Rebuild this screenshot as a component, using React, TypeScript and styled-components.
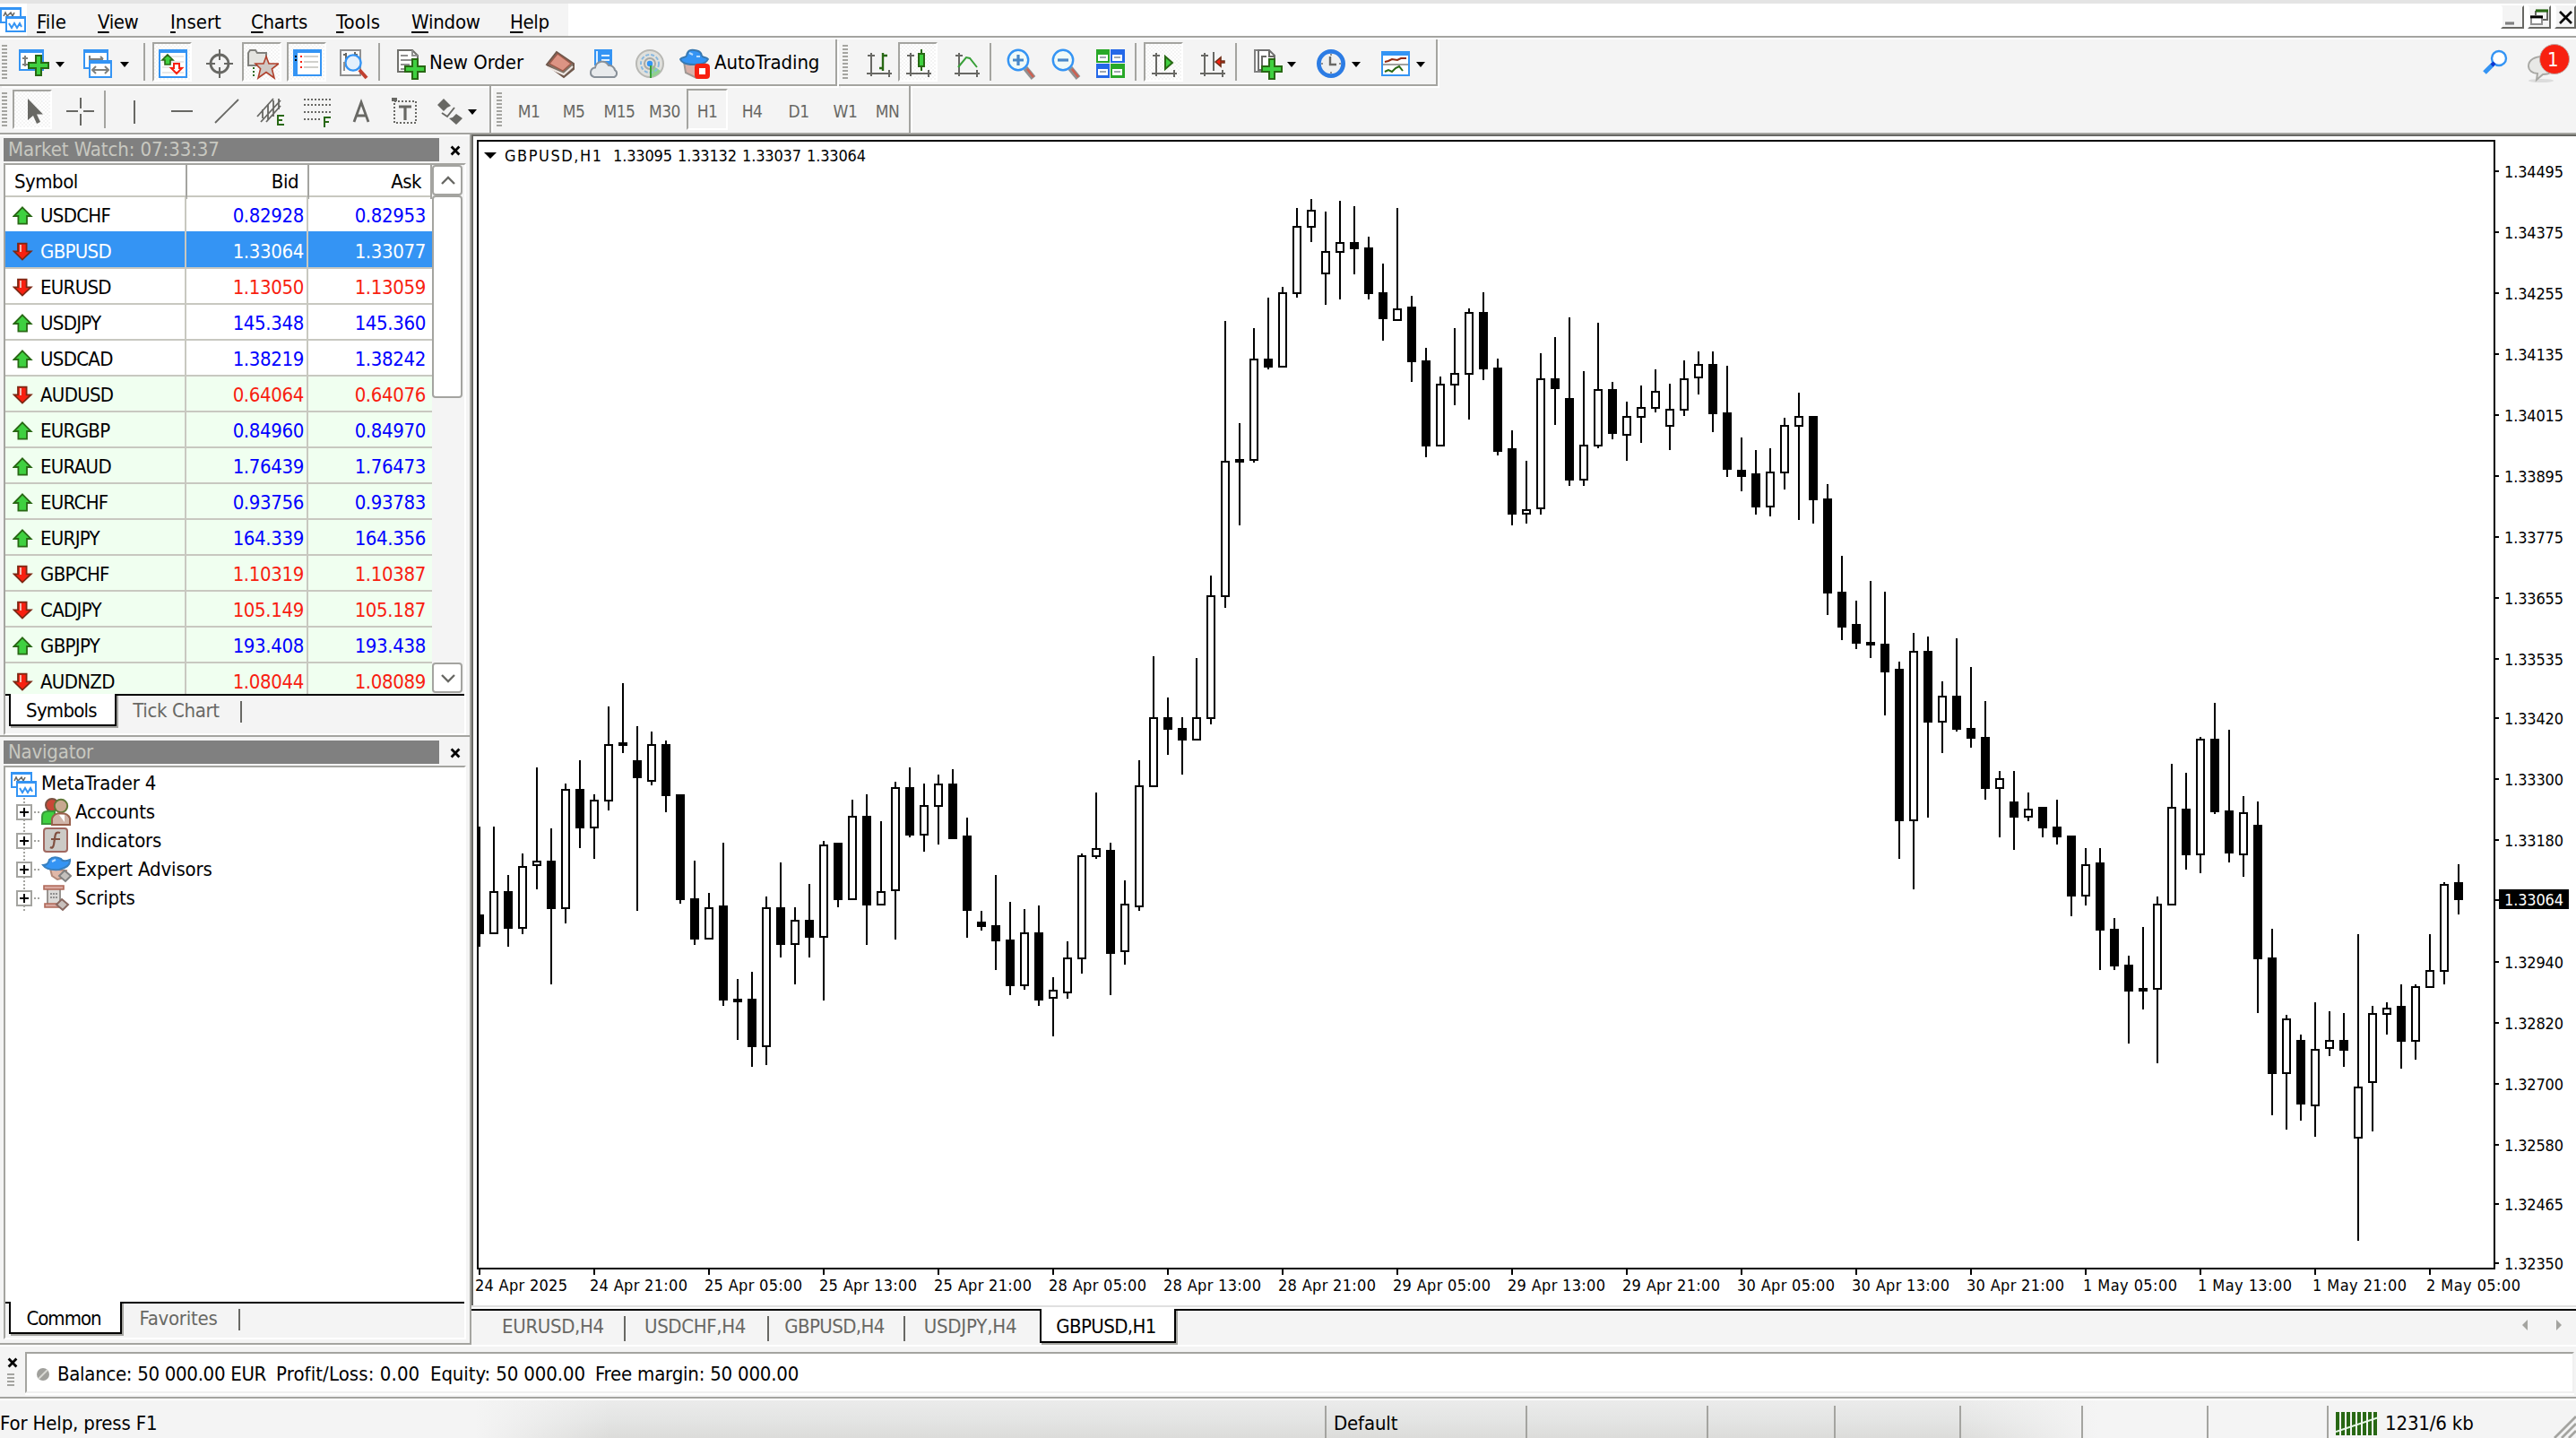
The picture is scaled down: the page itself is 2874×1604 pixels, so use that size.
import React from 'react';
import styled, { createGlobalStyle, css } from 'styled-components';

const FACE = '#f4f4f4';
const LINE = '#a4a4a0';
const SOFT = '#c8c8c0';
const DARK = '#686864';
const BLUE = '#3494f4';
const GREEN = '#3fd040';
const LEAF = '#286814';
const RED = '#f82010';
const FONT = '"DejaVu Sans Condensed", "DejaVu Sans", "Noto Sans", sans-serif';

const Global = createGlobalStyle`
  *, *::before, *::after { box-sizing: border-box; }
  body { margin: 0; background: ${FACE}; font-family: ${FONT}; font-stretch: condensed; }
`;

const Window = styled.div`
  width: 2874px;
  height: 1604px;
  overflow: hidden;
  display: flex;
  flex-direction: column;
  background: ${FACE};
  color: #000;
  font-size: 22px;
  letter-spacing: -0.55px;
  white-space: pre;
`;

/* ---------- menu bar ---------- */
const MenuBar = styled.header`
  height: 42px;
  flex: none;
  display: flex;
  background: #fff;
  border-top: 4px solid #e4e4e4;
  border-bottom: 2px solid ${LINE};
`;
const AppMark = styled.div`
  width: 30px;
  padding-top: 2px;
`;
const Menus = styled.nav`
  width: 604px;
  display: flex;
  background: ${FACE};
`;
const MenuItem = styled.span<{ $w: number; $ls: number }>`
  width: ${p => p.$w}px;
  padding-left: 11px;
  line-height: 41px;
  letter-spacing: ${p => p.$ls}px;
  u {
    text-decoration-thickness: 2px;
    text-underline-offset: 3px;
    text-decoration-skip-ink: none;
  }
`;
const Caption = styled.div`
  margin-left: auto;
  display: flex;
  gap: 4px;
  padding-top: 2px;
`;
const CaptionButton = styled.span<{ $w?: number }>`
  width: ${p => p.$w ?? 26}px;
  height: 26px;
  border: 2px solid #fff;
  border-right-color: ${DARK};
  border-bottom-color: ${DARK};
  border-top-color: ${FACE};
  background: ${FACE};
  display: grid;
  place-items: center;
`;

/* ---------- toolbars ---------- */
const ToolArea = styled.section`
  height: 106px;
  flex: none;
  display: grid;
  grid-template-columns: max-content 1fr;
  background: ${FACE};
  border-top: 2px solid #fff;
`;
const Row = styled.div`
  display: flex;
`;
const Band = styled.div<{ $w: number; $last?: boolean }>`
  width: ${p => p.$w}px;
  height: 52px;
  display: flex;
  align-items: center;
  border-right: 2px solid ${LINE};
  border-bottom: ${p => (p.$last ? 0 : 2)}px solid ${LINE};
  margin-right: 2px;
  box-shadow: 2px 2px 0 #fff;
`;
const Grip = styled.i<{ $gap?: number }>`
  width: 6px;
  height: 38px;
  margin-left: ${p => p.$gap ?? 2}px;
  background: repeating-linear-gradient(${LINE} 0 2px, transparent 2px 4px);
`;
const Rule = styled.i<{ $gap: number }>`
  width: 2px;
  height: 42px;
  margin-left: ${p => p.$gap}px;
  background: ${LINE};
`;
const Tool = styled.span<{ $gap: number; $w?: number; $on?: boolean }>`
  width: ${p => p.$w ?? 36}px;
  height: 44px;
  margin-left: ${p => p.$gap}px;
  display: grid;
  place-items: center;
  svg { transform: translate(1px, 2px); }
  ${p =>
    p.$on &&
    css`
      width: 44px;
      border: 2px solid #fff;
      border-top-color: ${LINE};
      border-left-color: ${LINE};
      background: repeating-conic-gradient(#fff 0 25%, ${FACE} 0 50%) 0 0 / 4px 4px;
    `}
`;
const ToolText = styled.span<{ $gap: number; $w: number }>`
  width: ${p => p.$w}px;
  margin-left: ${p => p.$gap}px;
  letter-spacing: -0.08px;
  line-height: 45px;
`;
const Caret = styled.i<{ $gap?: number }>`
  width: 10px;
  margin-left: ${p => p.$gap ?? 6}px;
  margin-top: 6px;
  border: 5px solid transparent;
  border-top: 6px solid #000;
  border-bottom: 0;
`;
const Periods = styled.div`
  display: flex;
  margin-left: 5px;
`;
const Period = styled.span<{ $w: number; $on?: boolean }>`
  width: ${p => p.$w}px;
  height: 46px;
  text-align: center;
  line-height: 47px;
  font-size: 19px;
  letter-spacing: -0.5px;
  color: ${DARK};
  border: 2px solid transparent;
  ${p =>
    p.$on &&
    css`
      border-color: ${LINE} #fff #fff ${LINE};
    `}
`;
const Alerts = styled.div`
  justify-self: end;
  width: 110px;
  height: 60px;
  padding-top: 2px;
  display: flex;
  align-items: flex-start;
`;

/* ---------- panels ---------- */
const Main = styled.main`
  height: 1352px;
  flex: none;
  display: flex;
  border-top: 2px solid ${LINE};
`;
const Side = styled.aside`
  width: 524px;
  display: flex;
  flex-direction: column;
  border-top: 2px solid #fff;
  border-bottom: 2px solid ${LINE};
`;
const Panel = styled.section<{ $h: number }>`
  height: ${p => p.$h}px;
  padding: 2px 4px 0;
  display: flex;
  flex-direction: column;
`;
const NavPanel = styled(Panel)`
  border-top: 2px solid ${LINE};
  padding-top: 4px;
`;
const TitleRow = styled.div`
  height: 28px;
  flex: none;
  display: flex;
`;
const Title = styled.h2<{ $ls: number }>`
  margin: 0;
  width: 486px;
  height: 26px;
  padding-left: 5px;
  background: #808080;
  color: ${SOFT};
  font-weight: 400;
  font-size: 22px;
  line-height: 25px;
  letter-spacing: ${p => p.$ls}px;
`;
const Close = styled.span`
  width: 26px;
  display: grid;
  place-items: center;
  padding: 0 0 0 10px;
`;
const Frame = styled.div`
  flex: 1;
  min-height: 0;
  width: 516px;
  display: flex;
  flex-direction: column;
  border: 2px solid #fff;
  border-top-color: ${LINE};
  border-left-color: ${LINE};
`;
const Watch = styled.div`
  height: 590px;
  flex: none;
  display: grid;
  grid-template-columns: 476px 34px;
  overflow: hidden;
`;
const Quotes = styled.div`
  height: 590px;
  overflow: hidden;
`;
const HeadRow = styled.div`
  height: 36px;
  display: grid;
  grid-template-columns: 203px 136px 137px;
  background: #fff;
  border-bottom: 2px solid ${SOFT};
  line-height: 38px;
`;
const HeadCell = styled.span<{ $right?: boolean }>`
  letter-spacing: -0.5px;
  border-right: 2px solid ${LINE};
  padding: ${p => (p.$right ? '0 10px 0 0' : '0 0 0 10px')};
  text-align: ${p => (p.$right ? 'right' : 'left')};
`;
const QuoteRow = styled.div<{ $tint?: boolean; $sel?: boolean }>`
  height: 40px;
  display: grid;
  grid-template-columns: 202px 136px 138px;
  background: ${p => (p.$sel ? BLUE : p.$tint ? '#f0fff0' : '#fff')};
  border-bottom: 2px solid ${SOFT};
  ${p =>
    p.$sel &&
    css`
      margin-top: -2px;
      height: 42px;
      padding-top: 2px;
    `}
`;
const NameCell = styled.span<{ $sel?: boolean }>`
  display: flex;
  align-items: center;
  gap: 7px;
  padding-left: 8px;
  line-height: 40px;
  letter-spacing: -0.7px;
  color: ${p => (p.$sel ? '#fff' : '#000')};
  border-right: 2px solid ${SOFT};
`;
const PriceCell = styled.span<{ $c: string; $last?: boolean }>`
  text-align: right;
  line-height: 42px;
  letter-spacing: -0.35px;
  color: ${p => p.$c};
  border-right: ${p => (p.$last ? 0 : 2)}px solid ${SOFT};
  padding-right: ${p => (p.$last ? 7 : 3)}px;
`;
const Scroll = styled.div`
  background: ${FACE};
  display: flex;
  flex-direction: column;
  align-items: center;
  padding-bottom: 1px;
`;
const ScrollButton = styled.span<{ $end?: boolean }>`
  width: 34px;
  height: 34px;
  flex: none;
  margin-top: ${p => (p.$end ? 'auto' : 0)};
  border: 2px solid ${LINE};
  border-radius: 4px;
  background: #fff;
  display: grid;
  place-items: center;
`;
const Thumb = styled.span`
  width: 34px;
  height: 226px;
  border: 2px solid ${LINE};
  border-radius: 4px;
  background: #fff;
`;
const Tabs = styled.div`
  height: 40px;
  flex: none;
  display: flex;
  border-top: 2px solid #000;
`;
const Tab = styled.span<{ $gap?: number; $w: number; $on?: boolean; $ls: number; $h?: number; $pull?: number }>`
  width: ${p => p.$w}px;
  height: ${p => p.$h ?? 36}px;
  margin-left: ${p => p.$gap ?? 0}px;
  padding-right: ${p => p.$pull ?? 0}px;
  text-align: center;
  line-height: ${p => (p.$h ?? 36) - 3}px;
  letter-spacing: ${p => p.$ls}px;
  color: ${p => (p.$on ? '#000' : DARK)};
  ${p =>
    p.$on &&
    css`
      margin-top: -2px;
      padding-top: 2px;
      background: #fff;
      border: 2px solid #000;
      border-top: 0;
      box-shadow: 2px 2px 0 ${LINE};
    `}
`;
const TabRule = styled.i<{ $gap?: number; $h?: number }>`
  width: 2px;
  height: ${p => p.$h ?? 24}px;
  margin: 6px 0 0 ${p => p.$gap ?? 0}px;
  background: ${DARK};
`;
const Tree = styled.ul`
  flex: 1;
  margin: 0;
  padding: 2px 0 0 6px;
  list-style: none;
  background: #fff;
`;
const Root = styled.li`
  height: 32px;
  display: flex;
  align-items: center;
  gap: 4px;
  line-height: 36px;
  letter-spacing: -0.15px;
`;
const Node = styled.li`
  height: 32px;
  display: flex;
  align-items: center;
  padding-left: 6px;
  letter-spacing: -0.15px;
  line-height: 38px;
  background:
    repeating-linear-gradient(${LINE} 0 2px, transparent 2px 4px) 14px 0 / 2px 100% no-repeat;
`;
const Plus = styled.svg`
  width: 18px;
  height: 18px;
  flex: none;
`;
const Dots = styled.i`
  width: 10px;
  height: 2px;
  background: repeating-linear-gradient(90deg, transparent 0 2px, ${LINE} 2px 4px);
`;
const NodeIcon = styled.span`
  width: 34px;
  height: 34px;
  margin-right: 4px;
  svg { display: block; }
`;

/* ---------- chart ---------- */
const ChartSide = styled.section`
  flex: 1;
  display: flex;
  flex-direction: column;
  border-left: 2px solid ${LINE};
`;
const ChartView = styled.div`
  height: 1310px;
  border-left: 2px solid ${DARK};
  border-top: 2px solid ${DARK};
  background: #fff;
  svg { display: block; }
`;
const ChartEdge = styled.div`
  height: 4px;
  margin-top: -4px;
  background: linear-gradient(#e0e0e0 50%, #fff 50%);
`;
const Pager = styled.div`
  margin-left: auto;
  padding: 10px 16px 0 0;
  display: flex;
  gap: 32px;
`;
const Tip = styled.i<{ $left?: boolean }>`
  width: 6px;
  height: 12px;
  background: ${LINE};
  clip-path: ${p => (p.$left ? 'polygon(100% 0, 0 50%, 100% 100%)' : 'polygon(0 0, 100% 50%, 0 100%)')};
`;

/* ---------- bottom ---------- */
const Terminal = styled.section`
  height: 60px;
  flex: none;
  display: flex;
  padding: 6px 0 4px 0;
  border-top: 2px solid #fff;
  border-bottom: 2px solid ${LINE};
`;
const TerminalGrip = styled.div`
  width: 28px;
  padding: 6px 0 0 8px;
  svg { display: block; }
`;
const TerminalDots = styled.i`
  display: block;
  width: 8px;
  height: 14px;
  margin-top: 6px;
  background: repeating-linear-gradient(${LINE} 0 2px, transparent 2px 4px);
`;
const Balance = styled.div`
  flex: 1;
  display: flex;
  align-items: center;
  margin-right: 2px;
  padding: 3px 0 0 9px;
  background: #fff;
  border: 2px solid #f0f0f0;
  border-top-color: ${LINE};
  border-left-color: ${LINE};
  box-shadow: 0 2px 0 #fff;
  svg { margin-right: 7px; }
`;
const Sum = styled.span<{ $w: number; $ls: number }>`
  width: ${p => p.$w}px;
  letter-spacing: ${p => p.$ls}px;
`;
const Status = styled.footer`
  flex: 1;
  display: flex;
  border-top: 2px solid #fff;
  letter-spacing: -0.15px;
  background:
    linear-gradient(90deg, ${FACE} 530px, rgba(244, 244, 244, 0) 680px, rgba(244, 244, 244, 0) 2180px, ${FACE} 2340px),
    linear-gradient(#ebebeb, #e4e5e4 50%, #dcdcda);
`;
const StatusCell = styled.span<{ $w: number; $first?: boolean }>`
  width: ${p => p.$w}px;
  height: 36px;
  margin-top: 6px;
  padding-top: 3px;
  padding-left: ${p => (p.$first ? 0 : 8)}px;
  border-left: ${p => (p.$first ? 0 : 2)}px solid ${LINE};
  display: flex;
  align-items: center;
  gap: 7px;
`;
const Corner = styled.svg`
  margin-left: auto;
  align-self: flex-end;
`;

/* ---------- icons, drawn on an 18 unit grid of doubled pixels ---------- */
const Pic = ({ children, w = 36, h = 36 }: { children: React.ReactNode; w?: number; h?: number }) => (
  <svg width={w} height={h} viewBox={`0 0 ${w / 2} ${h / 2}`} fill="none">
    {children}
  </svg>
);
const GreenPlus = ({ x, y }: { x: number; y: number }) => (
  <path d={`M${x + 4.5} ${y + 0.5}h3v4h4v3h-4v4h-3v-4h-4v-3h4z`} fill={GREEN} stroke={LEAF} />
);
const Axes = () => (
  <>
    <path d="M4.500 3v13M2 14.500h14" stroke={DARK} />
    <path d="M2.500 4.500h4M14.500 12.500v4" stroke={DARK} />
  </>
);
const AppIcon = () => (
  <Pic w={30} h={30}>
    <path d="M.5 1.500h11v8h-11z" fill="#fff" stroke={BLUE} />
    <path d="M0 2h12" stroke={BLUE} />
    <path d="M2 6l1-2 1 2 2-2 1 2 1-2" stroke={DARK} strokeWidth=".8" />
    <path d="M3.500 6.500h10.500v8h-10.500z" fill="#fff" stroke={BLUE} />
    <path d="M3 7h11" stroke={BLUE} />
    <path d="M5 10l1.500 2.500L8 10l1.500 2.500L11 10l1 2" stroke={BLUE} />
  </Pic>
);
const NewChartIcon = () => (
  <Pic>
    <path d="M.5 1.500h13v11H.5z" fill="#fff" stroke={BLUE} />
    <path d="M0 2h14" stroke={BLUE} strokeWidth="2" />
    <path d="M3.500 4.500v6M2 6h3M2 9.500h6" stroke="#80807c" />
    <GreenPlus x={5} y={4} />
  </Pic>
);
const ProfilesIcon = () => (
  <Pic>
    <path d="M.5 1.500h13v10H.5z" fill="#fff" stroke={BLUE} />
    <path d="M0 2h14" stroke={BLUE} strokeWidth="2" />
    <path d="M3.500 4.500v5M3 6.500h8M9.500 5l1.500 1.500" stroke="#80807c" />
    <path d="M3.500 7.500h12v9h-12z" fill="#fff" stroke={BLUE} />
    <path d="M3 8h13" stroke={BLUE} strokeWidth="2" />
    <path d="M5 12.500h9M7 10.500l-2 2 2 2M12 10.500l2 2-2 2" stroke="#80807c" />
  </Pic>
);
const WatchIcon = () => (
  <Pic>
    <path d="M1.500 1.500h15v15h-15z" fill="#fff" stroke={BLUE} />
    <path d="M1 2h16" stroke={BLUE} strokeWidth="2" />
    <path d="M3 5h12M3 8h12M3 11h12M3 14h12" stroke="#e8e8e8" />
    <path d="M6 4l3 3H7.500v2.500h-3V7H3z" fill={GREEN} stroke={LEAF} strokeWidth=".8" />
    <path d="M11 14.500l-3-3h1.500V9h3v2.500H14z" fill="#fff" stroke={RED} />
  </Pic>
);
const CrossIcon = () => (
  <Pic>
    <circle cx="9" cy="9" r="5" fill="#f4f4f4" stroke={DARK} strokeWidth="1.400" />
    <path d="M9 1v6M9 11v6M1.500 9h5M11.500 9h5" stroke={DARK} />
  </Pic>
);
const FavIcon = () => (
  <Pic>
    <path d="M1 3l1-1.500h3L6 3h5v7H1z" fill="#e4e4e0" stroke="#80807c" />
    <path d="M4 11v6" stroke={LEAF} strokeDasharray="1 1" />
    <path d="M11 5l1.500 4H18l-3.800 2.900L15.500 17 11 13.800 6.500 17l1.300-5.100L5 9h4.500z" fill="#d0c8c4" stroke="#b0402c" strokeWidth=".8" />
  </Pic>
);
const NavIcon = () => (
  <Pic>
    <path d="M1.500 1.500h15v14h-15z" fill="#fff" stroke={BLUE} />
    <path d="M1 2h16M2.500 1v15" stroke={BLUE} strokeWidth="2" />
    <path d="M5 5h1M5 8h1M5 11h1" stroke={RED} />
    <path d="M2 5h1M2 7h1" stroke="#000" />
    <path d="M7 5h8M7 8h8M7 11h8" stroke="#d0d0cc" />
  </Pic>
);
const TesterIcon = () => (
  <Pic>
    <path d="M1.500 1.500h11v14h-11z" fill="#fafafa" stroke="#909090" />
    <path d="M4.500 3v4M3 4h2M9.500 2.500v4M9 4h2" stroke={DARK} />
    <circle cx="8.500" cy="8.500" r="4.300" fill="#e4f0fc" stroke={BLUE} strokeWidth="1.200" />
    <path d="M3.500 8v5" stroke="#909090" />
    <path d="M12 12.500l4 4.500" stroke="#c04030" strokeWidth="2" />
  </Pic>
);
const OrderIcon = () => (
  <Pic>
    <path d="M1.500 1.500h8l3 3v9h-11z" fill="#fff" stroke="#70706c" />
    <path d="M9.500 1.500v3h3M3 4.500h4M3 7h7M3 9.500h5M3 12h4" stroke="#909090" />
    <GreenPlus x={5} y={6} />
  </Pic>
);
const BookIcon = () => (
  <Pic>
    <path d="M1.500 9.500L7 2.500l9.500 6.500v3L11 16.500z" fill="#807468" stroke="#70584c" />
    <path d="M3 9L7.500 3.500l7.500 5.500-4.500 4z" fill="#dc9484" stroke="#a05848" strokeWidth=".6" />
    <path d="M2 11l9 4 5-4.500" stroke="#f0e8e4" />
  </Pic>
);
const HostIcon = () => (
  <Pic>
    <path d="M3.500 1.500h9v8h-9z" fill={BLUE} stroke={BLUE} />
    <path d="M4.500 2v8M7 4.500h4.500M7 7h4.500" stroke="#e0f0ff" />
    <path d="M3 16.500a2.700 2.700 0 01.5-5.300A4 4 0 0111 10a3.200 3.200 0 013.500 2.600 2.200 2.200 0 01-.3 3.900z" fill="#e8eaec" stroke="#889098" />
  </Pic>
);
const SignalIcon = () => (
  <Pic>
    <circle cx="9" cy="9" r="7.500" fill="#e0e0dc" stroke="#b8b8b4" />
    <path d="M9 9v7.500A7.500 7.500 0 0015 13z" fill="#90d090" />
    <circle cx="9" cy="9" r="5" stroke="#88b8e0" strokeDasharray="2 1" />
    <circle cx="9" cy="9" r="3" stroke="#a8a8a4" />
    <circle cx="9" cy="9" r="1.600" fill={BLUE} />
    <path d="M9.500 10v7" stroke="#38a038" />
  </Pic>
);
const AutoIcon = () => (
  <Pic>
    <path d="M3 8h12l-2 8-3 1-6-3z" fill="#d8b0a8" stroke="#a09894" />
    <path d="M1 6.500C2 5 4 6 4.500 4.500 5 1.500 7 1 9 1.500s3.500.5 4 3c.5 1.500 2.500.5 3.500 2-1 2.500-5 3-8 3s-6.500-.5-7.500-3z" fill={BLUE} stroke="#3878b0" />
    <path d="M6 3l2 1M10 5h2" stroke="#b8dcff" />
    <rect x="9" y="9" width="8.500" height="8.500" rx="2" fill={RED} />
    <rect x="11.500" y="11.500" width="3.500" height="3.500" fill="#fff" />
  </Pic>
);
const BarsIcon = () => (
  <Pic>
    <Axes />
    <path d="M11 3v10M9 11.500h2M11 4.500h2.500" stroke={LEAF} strokeWidth="1.200" />
  </Pic>
);
const CandleIcon = () => (
  <Pic>
    <Axes />
    <path d="M10.500 1v12" stroke={LEAF} />
    <path d="M9 3.500h3v7H9z" fill={GREEN} stroke={LEAF} />
  </Pic>
);
const LineIcon = () => (
  <Pic>
    <Axes />
    <path d="M4 11l4.500-5.500 2 .5 4 5" stroke="#38a038" />
  </Pic>
);
const ZoomIcon = ({ plus }: { plus?: boolean }) => (
  <Pic>
    <path d="M11 11.500l4.500 5.500" stroke="#909090" strokeWidth="3" />
    <path d="M12 12l3.500 4.500" stroke="#d06050" strokeWidth="1.200" />
    <circle cx="7" cy="7" r="5.600" fill="#f0faf8" stroke={BLUE} strokeWidth="1.200" />
    <path d={plus ? 'M7 4v6M4 7h6' : 'M4 7h6'} stroke="#4888c8" strokeWidth="1.600" />
  </Pic>
);
const TileIcon = () => (
  <Pic>
    <path d="M1 1h7.500v7.500H1zM9 9h8v8H9z" fill="#28a828" />
    <path d="M9 1h8v7.500H9zM1 9h7.500v8H1z" fill="#2468e8" />
    <path d="M2 4h5.500v3.500H2zM10 4h5.500v3.500H10zM2 12h5.500v3.500H2zM10 12h5.500v3.500H10z" fill="#fff" />
    <path d="M3 5.500h3.500M11 5.500h3.500M3 13.500h3.500M11 13.500h3.500" stroke="#a0a8b0" />
  </Pic>
);
const AutoScrollIcon = () => (
  <Pic>
    <Axes />
    <path d="M9.500 5v7l4-3.500z" fill={GREEN} stroke={LEAF} />
  </Pic>
);
const ShiftIcon = () => (
  <Pic>
    <Axes />
    <path d="M9.500 2.500v10.500" stroke={DARK} />
    <path d="M10.500 8l3-2.500V7.500h2v1h-2v2z" fill={RED} stroke="#703018" strokeWidth=".8" />
  </Pic>
);
const IndicatorIcon = () => (
  <Pic>
    <path d="M1.500 1.500h7v12h-7z" fill="#fff" stroke="#808080" />
    <path d="M3.500 1.500h6l3 3v8h-9z" fill="#fff" stroke="#707070" />
    <path d="M9.500 2v3h3M5 5h3M5.500 5v6" stroke={DARK} />
    <GreenPlus x={5} y={6} />
  </Pic>
);
const ClockIcon = () => (
  <Pic>
    <circle cx="9" cy="9" r="6.800" fill="#eef0f0" stroke="#2c7ce4" strokeWidth="2.400" />
    <path d="M8.500 5v4.500H12" stroke={DARK} strokeWidth="1.200" />
    <path d="M9 3.500v1M9 13.500v1M3.500 9h1M13.500 9h1" stroke="#909090" />
  </Pic>
);
const TemplateIcon = () => (
  <Pic>
    <path d="M1.500 2.500h15v13h-15z" fill="#fff" stroke={BLUE} />
    <path d="M1 3.500h16" stroke={BLUE} strokeWidth="2" />
    <path d="M2 9.500h14" stroke="#a0a0a0" />
    <path d="M3 8l2-.5L7 6.500l3 .5 2-1h3" stroke="#902810" />
    <path d="M3 13.500l2-1 2 1 2-2 2-1 2 2.500" stroke={LEAF} />
  </Pic>
);
const CursorIcon = () => (
  <Pic>
    <path d="M6 2v12l3-2.500 2 4.500 2-1-2-4.200h3.500z" fill={DARK} />
  </Pic>
);
const CrosshairIcon = () => (
  <Pic>
    <path d="M9.500 1.500v6M9.500 10.500v6.500M1.500 9h6.500M11 9h6" stroke={DARK} />
  </Pic>
);
const VLineIcon = () => (
  <Pic>
    <path d="M8.500 3v13" stroke={DARK} />
  </Pic>
);
const HLineIcon = () => (
  <Pic>
    <path d="M3 9h12" stroke={DARK} />
  </Pic>
);
const TrendIcon = () => (
  <Pic>
    <path d="M2.500 15.500l13-13" stroke={DARK} strokeWidth=".9" />
  </Pic>
);
const ChannelIcon = () => (
  <Pic>
    <path d="M1 12L10 2M3 15L14 3M6 15l8-9M4 8v5M7 5v9M10 3v9M13 2v6" stroke={DARK} strokeWidth=".9" />
    <path d="M16 11.500h-3.500v5H16M12.500 14H15" stroke={LEAF} />
  </Pic>
);
const FiboIcon = () => (
  <Pic>
    <path d="M1 2.500h15M1 5.500h15M1 9.500h15M1 13.500h10" stroke={DARK} strokeDasharray="1 1" />
    <path d="M16 12.500h-3.500V18M12.500 15H15" stroke={LEAF} />
  </Pic>
);
const TextIcon = () => (
  <Pic>
    <path d="M5 15L9 4l4 11M6.500 11.500h5" stroke={DARK} strokeWidth="1.400" />
  </Pic>
);
const LabelIcon = () => (
  <Pic>
    <path d="M2.500 3.500h12v12h-12z" stroke={DARK} strokeDasharray="1 1" />
    <path d="M1 2.500h3" stroke={DARK} strokeWidth="2" />
    <path d="M5 6.500h7M8.500 6v8" stroke={DARK} strokeWidth="1.600" />
  </Pic>
);
const ArrowsIcon = () => (
  <Pic>
    <path d="M5 2l4 4-2 1-2 2-3.500-3.500z" fill={DARK} />
    <path d="M4 10l3 2 4-5" stroke={DARK} />
    <path d="M12 16.500L8 13l2-.5 2-2 3.500 2.500z" fill={DARK} />
  </Pic>
);
const SearchIcon = () => (
  <Pic w={30} h={30}>
    <circle cx="9" cy="5" r="4" fill="#fff" stroke={BLUE} strokeWidth="1.200" />
    <path d="M6 8l-5 5" stroke={BLUE} strokeWidth="2.600" />
    <path d="M6.500 7.500L5 9" stroke="#1038d0" strokeWidth="2" />
  </Pic>
);
const AlertIcon = () => (
  <svg width="54" height="52" viewBox="0 0 54 52">
    <ellipse cx="18" cy="42" rx="14" ry="2" fill="#dcdcdc" />
    <path d="M4 26c0-8 8-11 16-11s14 4 14 10-6 10-14 10l-7 6 1-7c-6 0-10-4-10-8z" fill="#e8e8e6" stroke="#a8a8a4" strokeWidth="2" />
    <circle cx="33" cy="18" r="16.500" fill={RED} stroke="#c0a8a4" />
    <text x="31" y="26" fill="#fff" fontSize="22" textAnchor="middle" fontFamily={FONT}>1</text>
  </svg>
);
const SmallX = () => (
  <Pic w={12} h={12}>
    <path d="M.8.8l4.400 4.400M5.200.8L.8 5.200" stroke="#000" strokeWidth="1.400" />
  </Pic>
);
const Move = ({ up }: { up: boolean }) =>
  up ? (
    <Pic w={24} h={22}>
      <path d="M5.500.7l4.800 4.800H8v4.300H3.200V5.500H.8z" fill={GREEN} stroke={LEAF} strokeWidth=".9" />
    </Pic>
  ) : (
    <Pic w={24} h={22}>
      <path d="M5.500 9.800L.8 5.200H3V.8h4.800v4.400h2.500z" fill={RED} stroke="#7c2814" strokeWidth=".9" />
      <path d="M4.500 1.500v4" stroke="#f0b8b0" />
    </Pic>
  );
const TreeIcons = {
  Accounts: (
    <Pic w={34} h={34}>
      <circle cx="6" cy="4.500" r="3.500" fill="#c84838" stroke="#785040" />
      <path d="M.5 15v-4q0-3 3-3h4v7z" fill={GREEN} stroke="#389838" />
      <circle cx="11" cy="5" r="3.600" fill="#c8a890" stroke="#607838" />
      <path d="M6 15.500V12q1-3 5-3t5 3v3.500z" fill="#d0b4a8" stroke="#98604c" />
      <path d="M10 10l3 4v-4z" fill="#fff" />
    </Pic>
  ),
  Indicators: (
    <Pic w={34} h={34}>
      <rect x="1.500" y="1.500" width="13" height="13" rx="1.500" fill="#cccac6" stroke="#a06860" />
      <path d="M10.500 4q-2.500-1-2.800 2L7 10.500Q6.500 13 5 12M5.500 7.500h5" stroke="#805040" strokeWidth="1.100" />
    </Pic>
  ),
  'Expert Advisors': (
    <Pic w={34} h={34}>
      <path d="M5 8l1 4 3 2 4-1 1-4z" fill="#e0b8a8" stroke="#b08878" />
      <path d="M1 6q3 0 3.500-3Q7 .5 11 2.500q1 2 5 .5.500 4-6 5.500Q3 9 1 6z" fill={BLUE} stroke="#3880c0" />
      <path d="M6 4l2-1" stroke="#c0e0ff" />
      <path d="M13 9l3.500 3-3 3-3.500-3z" fill="#c4c0bc" stroke="#808080" />
    </Pic>
  ),
  Scripts: (
    <Pic w={34} h={34}>
      <path d="M3.500 3h7v10h-7z" fill="#dcdad8" stroke="#989490" />
      <path d="M1.500 1.500h11v2h-11zM2 11.500h9v2H2z" fill="#d8a8a0" stroke="#b06858" strokeWidth=".8" />
      <path d="M5 6h4M5 8h4" stroke="#909090" strokeDasharray="1 .5" />
      <path d="M11.500 9l3.500 3-3 3-3.500-3z" fill="#c8c0bc" stroke="#886860" />
    </Pic>
  ),
};

/* ---------- data ---------- */
const menus: [string, number, number][] = [
  ['File', 68, 0], ['View', 81, -0.4], ['Insert', 90, 0], ['Charts', 95, -0.3],
  ['Tools', 84, 0.2], ['Window', 110, -0.2], ['Help', 60, -0.4],
];
const periods: [string, number][] = [
  ['M1', 50], ['M5', 50], ['M15', 52], ['M30', 49], ['H1', 46], ['H4', 54], ['D1', 50], ['W1', 54], ['MN', 40],
];
const quotes: [string, string, string, boolean][] = [
  ['USDCHF', '0.82928', '0.82953', true],
  ['GBPUSD', '1.33064', '1.33077', false],
  ['EURUSD', '1.13050', '1.13059', false],
  ['USDJPY', '145.348', '145.360', true],
  ['USDCAD', '1.38219', '1.38242', true],
  ['AUDUSD', '0.64064', '0.64076', false],
  ['EURGBP', '0.84960', '0.84970', true],
  ['EURAUD', '1.76439', '1.76473', true],
  ['EURCHF', '0.93756', '0.93783', true],
  ['EURJPY', '164.339', '164.356', true],
  ['GBPCHF', '1.10319', '1.10387', false],
  ['CADJPY', '105.149', '105.187', false],
  ['GBPJPY', '193.408', '193.438', true],
  ['AUDNZD', '1.08044', '1.08089', false],
];
// high, body top, body bottom, low, 1 = bearish (solid)
const candles: number[][] = [
  [922,1020,1042,1056,1],[922,994,1042,1042,0],[976,994,1036,1056,1],[952,966,1036,1042,0],[856,960,966,992,0],
  [924,960,1014,1098,1],[874,880,1014,1030,0],[848,880,924,946,1],[886,892,924,958,0],[788,830,894,904,0],
  [762,828,832,840,1],[810,848,868,1016,1],[816,830,872,876,0],[826,830,888,906,1],[886,886,1004,1008,1],
  [960,1002,1048,1054,1],[996,1012,1048,1048,0],[940,1010,1116,1122,1],[1092,1114,1118,1160,1],[1084,1114,1168,1190,1],
  [1000,1012,1168,1188,0],[962,1012,1054,1068,1],[1012,1026,1054,1098,0],[986,1026,1046,1068,1],[938,942,1046,1116,0],
  [940,940,1004,1012,1],[892,910,1004,1004,0],[886,910,1010,1054,1],[916,994,1010,1010,0],[872,878,994,1048,0],
  [856,878,932,934,1],[874,898,932,950,0],[864,874,900,942,0],[858,874,936,936,1],[912,932,1016,1046,1],
  [1016,1028,1034,1038,1],[976,1032,1050,1082,1],[1006,1048,1100,1110,1],[1014,1040,1100,1104,0],[1010,1040,1116,1122,1],
  [1090,1104,1114,1156,0],[1050,1068,1108,1114,0],[952,954,1070,1086,0],[884,946,956,958,0],[940,948,1064,1110,1],
  [982,1008,1062,1076,0],[848,876,1012,1016,0],[732,800,878,878,0],[778,800,814,842,1],[800,812,826,864,1],
  [734,800,826,826,0],[642,664,802,808,0],[358,514,666,678,0],[472,512,516,586,1],[366,400,514,516,0],
  [332,400,410,412,1],[320,326,410,410,0],[232,252,328,332,0],[222,234,254,270,0],[236,280,306,340,0],
  [224,270,282,334,0],[230,270,278,306,1],[264,276,328,334,1],[294,326,356,380,1],[232,344,358,358,0],
  [330,342,404,426,1],[388,402,498,510,1],[420,428,498,498,0],[366,416,430,452,0],[344,348,418,468,0],
  [326,348,412,424,1],[400,410,504,508,1],[480,500,574,586,1],[514,568,574,584,0],[394,422,568,574,0],
  [376,422,434,474,1],[354,444,536,542,1],[414,496,536,542,0],[360,434,498,500,0],[426,434,484,490,1],
  [448,464,486,514,0],[430,454,466,494,0],[412,436,456,460,0],[428,456,476,502,0],[402,422,458,464,0],
  [392,406,422,440,0],[392,406,462,482,1],[408,460,524,532,1],[488,524,532,548,1],[502,528,566,574,1],
  [500,526,566,576,0],[466,474,528,546,0],[438,464,476,580,0],[464,464,558,584,1],[540,556,662,686,1],
  [620,660,700,714,1],[670,696,718,724,1],[648,716,720,734,1],[660,718,750,798,1],[738,746,916,958,1],
  [706,726,916,992,0],[710,726,806,912,1],[760,776,806,840,0],[712,776,814,816,1],[744,812,824,834,1],
  [782,822,880,892,1],[860,868,880,934,0],[860,894,912,948,1],[884,902,912,916,0],[900,900,924,934,1],
  [892,922,934,942,1],[932,932,1000,1022,1],[946,964,1000,1010,0],[946,962,1038,1082,1],[1024,1036,1078,1082,1],
  [1066,1076,1106,1164,1],[1034,1102,1106,1126,1],[1000,1008,1104,1186,0],[852,900,1010,1010,0],[862,902,954,970,1],
  [822,824,954,974,0],[784,824,906,908,1],[814,904,952,962,1],[888,906,954,978,0],[894,920,1070,1130,1],
  [1036,1068,1198,1244,1],[1132,1136,1198,1260,0],[1154,1160,1232,1250,1],[1118,1170,1234,1268,0],[1128,1160,1170,1178,0],
  [1130,1160,1172,1190,1],[1042,1212,1270,1384,0],[1122,1130,1208,1262,0],[1118,1124,1132,1154,0],[1098,1122,1162,1192,1],
  [1098,1100,1162,1182,0],[1042,1082,1102,1102,0],[984,986,1084,1098,0],[964,984,1004,1020,1],
];
const prices: [string, number][] = [
  ['1.34495', 190], ['1.34375', 258], ['1.34255', 326], ['1.34135', 394], ['1.34015', 462], ['1.33895', 530],
  ['1.33775', 598], ['1.33655', 666], ['1.33535', 734], ['1.33420', 800], ['1.33300', 868], ['1.33180', 936],
  ['1.32940', 1072], ['1.32820', 1140], ['1.32700', 1208], ['1.32580', 1276], ['1.32465', 1342], ['1.32350', 1408],
];
const dates = [
  '24 Apr 2025', '24 Apr 21:00', '25 Apr 05:00', '25 Apr 13:00', '25 Apr 21:00', '28 Apr 05:00', '28 Apr 13:00',
  '28 Apr 21:00', '29 Apr 05:00', '29 Apr 13:00', '29 Apr 21:00', '30 Apr 05:00', '30 Apr 13:00', '30 Apr 21:00',
  '1 May 05:00', '1 May 13:00', '1 May 21:00', '2 May 05:00',
];

const Chart = () => (
  <svg width="2346" height="1308" viewBox="528 152 2346 1308" fontFamily={FONT} fontSize="18" letterSpacing="0">
    <g shapeRendering="crispEdges">
      <path d="M533 1416V157H2783V1416M532 1415H2784" fill="none" stroke="#000" strokeWidth="2" />
      <clipPath id="plot"><path d="M534 158H2782V1414H534z" /></clipPath>
      <g clipPath="url(#plot)">
        {candles.map(([hi, top, bottom, lo, solid], i) => {
          const x = 534 + i * 16;
          return (
            <g key={i}>
              <rect x={x} y={hi} width="2" height={lo - hi} />
              <rect x={x - 4} y={top} width="10" height={bottom - top} />
              {!solid && <rect x={x - 2} y={top + 2} width="6" height={bottom - top - 4} fill="#fff" />}
            </g>
          );
        })}
      </g>
      {prices.map(([, y]) => <rect key={y} x="2784" y={y} width="4" height="2" />)}
      <rect x="2784" y="1003" width="4" height="2" />
      {dates.map((d, i) => <rect key={d} x={534 + i * 128} y="1416" width="2" height="6" />)}
      <rect x="2788" y="992" width="78" height="22" />
    </g>
    <path d="M540 170h14l-7 7z" />
    <text x="563" y="180" textLength="108">GBPUSD,H1</text>
    {['1.33095', '1.33132', '1.33037', '1.33064'].map((p, i) => (
      <text key={p} x={684 + i * 72} y="180" textLength="66">{p}</text>
    ))}
    {prices.map(([p, y]) => <text key={p} x="2794" y={y + 8} textLength="66">{p}</text>)}
    <text x="2794" y="1010" textLength="66" fill="#fff">1.33064</text>
    {dates.map((d, i) => (
      <text key={d} x={i > 13 ? 532 + i * 128 - (i === 17 ? 1 : 0) : 530 + i * 128} y="1440" textLength={i === 0 ? 103 : i > 13 ? 105 : 109}>{d}</text>
    ))}
  </svg>
);

export default function App() {
  return (
    <>
      <Global />
      <Window>
        <MenuBar>
          <AppMark><AppIcon /></AppMark>
          <Menus>
            {menus.map(([name, w, ls]) => (
              <MenuItem key={name} $w={w} $ls={ls}><u>{name[0]}</u>{name.slice(1)}</MenuItem>
            ))}
          </Menus>
          <Caption>
            <CaptionButton><Pic w={20} h={20}><path d="M1 8.500h5" stroke="#808080" strokeWidth="1.600" /></Pic></CaptionButton>
            <CaptionButton>
              <Pic w={20} h={20}>
                <path d="M3 1.500h6.500v5H7M3 1.500V4" stroke={DARK} />
                <path d="M3 1.500h7" stroke={LEAF} strokeWidth="1.600" />
                <path d="M.5 4.500h6v4.500h-6z" fill="#fff" stroke="#909090" />
                <path d="M0 5h7" stroke="#000" strokeWidth="1.400" />
              </Pic>
            </CaptionButton>
            <CaptionButton $w={24}><Pic w={20} h={20}><path d="M2 2l6.500 6.500M8.500 2L2 8.500" stroke="#000" strokeWidth="1.300" /></Pic></CaptionButton>
          </Caption>
        </MenuBar>

        <ToolArea>
          <div>
            <Row>
              <Band $w={934}>
                <Grip />
                <Tool $gap={12}><NewChartIcon /></Tool><Caret />
                <Tool $gap={20}><ProfilesIcon /></Tool><Caret />
                <Rule $gap={16} />
                <Tool $gap={8} $on><WatchIcon /></Tool>
                <Tool $gap={12}><CrossIcon /></Tool>
                <Tool $gap={8} $on><FavIcon /></Tool>
                <Tool $gap={6} $on><NavIcon /></Tool>
                <Tool $gap={12}><TesterIcon /></Tool>
                <Rule $gap={10} />
                <Tool $gap={16}><OrderIcon /></Tool>
                <ToolText $gap={3} $w={104}>New Order</ToolText>
                <Tool $gap={23}><BookIcon /></Tool>
                <Tool $gap={14}><HostIcon /></Tool>
                <Tool $gap={14}><SignalIcon /></Tool>
                <Tool $gap={14}><AutoIcon /></Tool>
                <ToolText $gap={5} $w={119}>AutoTrading</ToolText>
              </Band>
              <Band $w={668}>
                <Grip $gap={4} />
                <Tool $gap={16}><BarsIcon /></Tool>
                <Tool $gap={4} $on><CandleIcon /></Tool>
                <Tool $gap={14}><LineIcon /></Tool>
                <Rule $gap={8} />
                <Tool $gap={15}><ZoomIcon plus /></Tool>
                <Tool $gap={14}><ZoomIcon /></Tool>
                <Tool $gap={13}><TileIcon /></Tool>
                <Rule $gap={10} />
                <Tool $gap={8} $on><AutoScrollIcon /></Tool>
                <Tool $gap={14}><ShiftIcon /></Tool>
                <Rule $gap={8} />
                <Tool $gap={16}><IndicatorIcon /></Tool><Caret $gap={4} />
                <Tool $gap={20}><ClockIcon /></Tool><Caret />
                <Tool $gap={20}><TemplateIcon /></Tool><Caret />
              </Band>
            </Row>
            <Row>
              <Band $w={548} $last>
                <Grip />
                <Tool $gap={6} $on><CursorIcon /></Tool>
                <Tool $gap={12}><CrosshairIcon /></Tool>
                <Rule $gap={10} />
                <Tool $gap={14}><VLineIcon /></Tool>
                <Tool $gap={16}><HLineIcon /></Tool>
                <Tool $gap={14}><TrendIcon /></Tool>
                <Tool $gap={14}><ChannelIcon /></Tool>
                <Tool $gap={16}><FiboIcon /></Tool>
                <Tool $gap={12}><TextIcon /></Tool>
                <Tool $gap={14}><LabelIcon /></Tool>
                <Tool $gap={14}><ArrowsIcon /></Tool><Caret $gap={2} />
              </Band>
              <Band $w={466} $last>
                <Grip $gap={4} />
                <Periods>
                  {periods.map(([p, w]) => <Period key={p} $w={w} $on={p === 'H1'}>{p}</Period>)}
                </Periods>
              </Band>
            </Row>
          </div>
          <Alerts>
            <Tool $gap={5} $w={30}><SearchIcon /></Tool>
            <Tool $gap={17} $w={54}><AlertIcon /></Tool>
          </Alerts>
        </ToolArea>

        <Main>
          <Side>
            <Panel $h={668}>
              <TitleRow><Title $ls={-0.08}>Market Watch: 07:33:37</Title><Close><SmallX /></Close></TitleRow>
              <Frame>
                <Watch>
                  <Quotes>
                    <HeadRow>
                      <HeadCell>Symbol</HeadCell>
                      <HeadCell $right>Bid</HeadCell>
                      <HeadCell $right>Ask</HeadCell>
                    </HeadRow>
                    {quotes.map(([name, bid, ask, up], i) => {
                      const sel = i === 1;
                      const c = sel ? '#fff' : up ? '#0000ff' : RED;
                      return (
                        <QuoteRow key={name} $sel={sel} $tint={i > 4}>
                          <NameCell $sel={sel}><Move up={up} />{name}</NameCell>
                          <PriceCell $c={c}>{bid}</PriceCell>
                          <PriceCell $c={c} $last>{ask}</PriceCell>
                        </QuoteRow>
                      );
                    })}
                  </Quotes>
                  <Scroll>
                    <ScrollButton><Pic w={20} h={20}><path d="M2 7l3.500-3.500L9 7" stroke={DARK} strokeWidth="1.200" /></Pic></ScrollButton>
                    <Thumb />
                    <ScrollButton $end><Pic w={20} h={20}><path d="M2 3.500L5.500 7 9 3.500" stroke={DARK} strokeWidth="1.200" /></Pic></ScrollButton>
                  </Scroll>
                </Watch>
                <Tabs>
                  <Tab $gap={4} $w={120} $on $ls={-0.75} $pull={3}>Symbols</Tab>
                  <Tab $w={136} $ls={-0.35} $pull={3}>Tick Chart</Tab>
                  <TabRule $gap={2} />
                </Tabs>
              </Frame>
            </Panel>
            <NavPanel $h={674}>
              <TitleRow><Title $ls={-0.2}>Navigator</Title><Close><SmallX /></Close></TitleRow>
              <Frame>
                <Tree>
                  <Root><AppIcon />MetaTrader 4</Root>
                  {(Object.keys(TreeIcons) as (keyof typeof TreeIcons)[]).map(name => (
                    <Node key={name}>
                      <Plus viewBox="0 0 9 9">
                        <path d="M.5.5h8v8h-8z" fill="#fff" stroke={LINE} />
                        <path d="M2 4.500h5M4.500 2v5" stroke="#000" />
                      </Plus>
                      <Dots />
                      <NodeIcon>{TreeIcons[name]}</NodeIcon>
                      {name}
                    </Node>
                  ))}
                </Tree>
                <Tabs>
                  <Tab $gap={4} $w={126} $on $ls={-1} $pull={4}>Common</Tab>
                  <Tab $w={128} $ls={-0.25} $pull={2}>Favorites</Tab>
                  <TabRule $gap={2} />
                </Tabs>
              </Frame>
            </NavPanel>
          </Side>

          <ChartSide>
            <ChartView><Chart /></ChartView>
            <ChartEdge />
            <Tabs>
              <Tab $w={170} $ls={-0.35} $h={38}>  EURUSD,H4</Tab><TabRule $h={28} />
              <Tab $w={158} $ls={-0.35} $h={38} $pull={3}>USDCHF,H4</Tab><TabRule $h={28} />
              <Tab $w={150} $ls={-0.6} $h={38} $pull={4}>GBPUSD,H4</Tab><TabRule $h={28} />
              <Tab $w={150} $ls={-0.2} $h={38} $pull={5}>USDJPY,H4</Tab>
              <Tab $w={152} $ls={-0.6} $h={38} $on $pull={4}>GBPUSD,H1</Tab>
              <Pager><Tip $left /><Tip /></Pager>
            </Tabs>
          </ChartSide>
        </Main>

        <Terminal>
          <TerminalGrip>
            <SmallX />
            <TerminalDots />
          </TerminalGrip>
          <Balance>
            <Pic w={18} h={18}><circle cx="4.500" cy="4.500" r="3.500" fill="#a0a09c" /><path d="M2 7l5-5" stroke="#d8d8d4" /></Pic>
            <Sum $w={244} $ls={-0.3}>Balance: 50 000.00 EUR</Sum>
            <Sum $w={172} $ls={0.1}>Profit/Loss: 0.00</Sum>
            <Sum $w={184} $ls={-0.1}>Equity: 50 000.00</Sum>
            <Sum $w={240} $ls={-0.2}>Free margin: 50 000.00</Sum>
          </Balance>
        </Terminal>
        <Status>
          <StatusCell $w={1478} $first>For Help, press F1</StatusCell>
          <StatusCell $w={224}>Default</StatusCell>
          <StatusCell $w={202} />
          <StatusCell $w={142} />
          <StatusCell $w={140} />
          <StatusCell $w={136} />
          <StatusCell $w={140} />
          <StatusCell $w={134} />
          <StatusCell $w={230}>
            <Pic w={48} h={26}>
              <path d="M0 6.500h24" stroke={LEAF} strokeWidth="13" strokeDasharray="2 1" />
              <path d="M0 11L24 3" stroke="#e8f8e8" />
            </Pic>
            1231/6 kb
          </StatusCell>
          <Corner width="48" height="36" viewBox="0 0 24 18"><path d="M12 18L24 6M16 18l8-8M20 18l4-4" stroke={LINE} strokeWidth="1.400" /></Corner>
        </Status>
      </Window>
    </>
  );
}
